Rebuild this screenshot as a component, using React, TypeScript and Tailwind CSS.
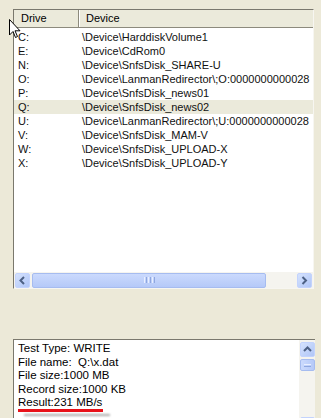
import React from 'react';

const drives = [
  { drive: 'C:', device: '\\Device\\HarddiskVolume1' },
  { drive: 'E:', device: '\\Device\\CdRom0' },
  { drive: 'N:', device: '\\Device\\SnfsDisk_SHARE-U' },
  { drive: 'O:', device: '\\Device\\LanmanRedirector\\;O:0000000000028' },
  { drive: 'P:', device: '\\Device\\SnfsDisk_news01' },
  { drive: 'Q:', device: '\\Device\\SnfsDisk_news02', selected: true },
  { drive: 'U:', device: '\\Device\\LanmanRedirector\\;U:0000000000028' },
  { drive: 'V:', device: '\\Device\\SnfsDisk_MAM-V' },
  { drive: 'W:', device: '\\Device\\SnfsDisk_UPLOAD-X' },
  { drive: 'X:', device: '\\Device\\SnfsDisk_UPLOAD-Y' },
];

const results = [
  'Test Type: WRITE',
  'File name:  Q:\\x.dat',
  'File size:1000 MB',
  'Record size:1000 KB',
  'Result:231 MB/s',
];

const Chevron = ({ dir }: { dir: 'left' | 'right' | 'up' }) => {
  const d =
    dir === 'left' ? 'M6 1 L2.5 4.5 L6 8' : dir === 'right' ? 'M2.5 1 L6 4.5 L2.5 8' : 'M1 6 L4.5 2.5 L8 6';
  return (
    <svg width="9" height="9" viewBox="0 0 9 9">
      <path d={d} fill="none" stroke="#4d6185" strokeWidth="2" />
    </svg>
  );
};

const ScrollButton = ({ dir }: { dir: 'left' | 'right' | 'up' }) => (
  <div className="w-[15px] h-[15px] shrink-0 rounded-[2px] border border-[#c3d3fd] bg-gradient-to-br from-[#d5e2fd] to-[#b0c6f7] flex items-center justify-center">
    <Chevron dir={dir} />
  </div>
);

// mouse pointer sitting over the first row
const Cursor = () => (
  <svg className="absolute left-[9px] top-[19px]" width="12" height="20" viewBox="0 0 12 20">
    <path d="M0.5 0.5 L0.5 16 L4 12.5 L6.5 18.5 L8.5 17.5 L6 11.8 L11 11.8 Z" fill="#fff" stroke="#000" strokeWidth="1" />
  </svg>
);

export default function App() {
  return (
    <div className="relative w-[321px] h-[418px] overflow-hidden bg-[#ece9d8] text-[11px] text-black font-['Liberation_Sans',Arial,sans-serif]">
      {/* Drive list */}
      <div className="ml-[13px] mt-[9px] w-[301px] h-[280px] flex flex-col border border-t-[#7a786d] border-l-[#7a786d] border-r-[#f7f6f1] border-b-[#f7f6f1] bg-white">
        <div className="h-[18px] flex shrink-0 bg-[#ebeadb] border-b border-b-[#8c8a7d]">
          <div className="w-[65px] pl-[7px] flex items-center border-r border-r-[#8c8a7d]">Drive</div>
          <div className="flex-1 pl-[6px] flex items-center border-l border-l-white">Device</div>
        </div>
        <div className="flex-1 pt-[2px] overflow-hidden text-[#111]">
          {drives.map((d) => (
            <div
              key={d.drive}
              className={`h-[14px] flex items-center whitespace-nowrap ${d.selected ? 'bg-[#ebeadb]' : ''}`}
            >
              <div className="w-[67px] pl-[4px] shrink-0">{d.drive}</div>
              <div className="pl-[1px]">{d.device}</div>
            </div>
          ))}
        </div>
        <div className="h-[16px] flex items-center shrink-0 bg-[#f5f4ef] pl-[1px] pr-[1px]">
          <ScrollButton dir="left" />
          <div className="ml-[2px] w-[234px] h-[15px] rounded-[2px] border border-[#a6bcf0] bg-gradient-to-b from-[#cbdafd] to-[#b5c9f8] flex items-center justify-center gap-[1px]">
            <span className="w-[1px] h-[6px] bg-[#e9efff]" />
            <span className="w-[1px] h-[6px] bg-[#8fa7df]" />
            <span className="w-[1px] h-[6px] bg-[#e9efff]" />
            <span className="w-[1px] h-[6px] bg-[#8fa7df]" />
            <span className="w-[1px] h-[6px] bg-[#e9efff]" />
            <span className="w-[1px] h-[6px] bg-[#8fa7df]" />
          </div>
          <div className="flex-1" />
          <ScrollButton dir="right" />
        </div>
      </div>

      {/* Result box */}
      <div className="ml-[13px] mt-[50px] w-[302px] h-[100px] flex border-t border-l border-[#7a786d] bg-white">
        <div className="flex-1 pl-[4px] pt-[2px] leading-[13.5px] text-[11.5px]">
          {results.map((r) => (
            <div key={r} className="whitespace-pre">{r}</div>
          ))}
          <div className="mt-[-1px] w-[85px] h-[3px] bg-[#e8121a]" />
          <div className="mt-[2px] ml-[6px] w-[86px] h-[2px] bg-[#a9a9a9] blur-[1px]" />
        </div>
        <div className="w-[16px] flex flex-col items-center bg-[#f5f4ef] pt-[2px]">
          <ScrollButton dir="up" />
          <div className="mt-[2px] w-[15px] h-[12px] rounded-[2px] border border-[#a6bcf0] bg-gradient-to-r from-[#cbdafd] to-[#b5c9f8] flex flex-col items-center justify-center gap-[1px]">
            <span className="w-[7px] h-[1px] bg-[#e9efff]" />
            <span className="w-[7px] h-[1px] bg-[#8fa7df]" />
          </div>
          <div className="mt-[46px] w-[15px] h-[15px] rounded-[2px] border border-[#c3d3fd] bg-[#c8d7fc]" />
        </div>
      </div>

      <Cursor />
    </div>
  );
}
